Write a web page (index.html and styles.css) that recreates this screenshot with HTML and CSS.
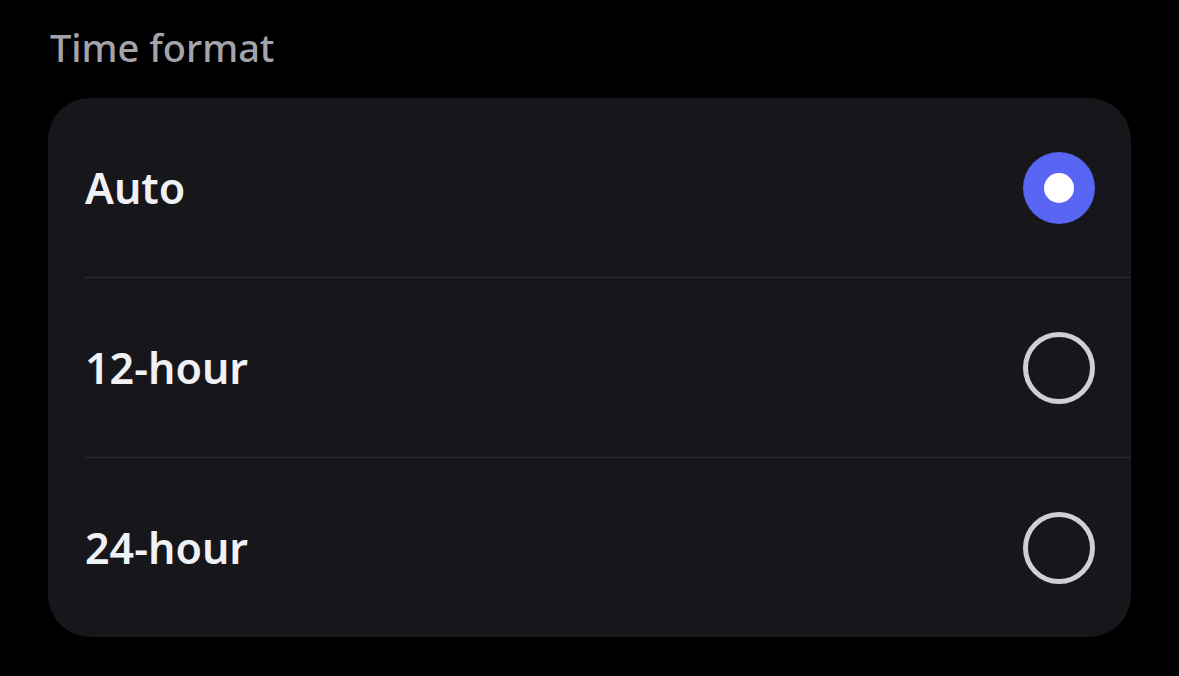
FILE: index.html
```html
<!DOCTYPE html>
<html lang="en">
<head>
<meta charset="utf-8">
<title>Time format</title>
<link rel="stylesheet" href="styles.css">
</head>
<body>
<div class="page">
  <h2 class="section-title">Time format</h2>
  <div class="card">
    <div class="row">
      <span class="label">Auto</span>
      <span class="radio selected"><span class="dot"></span></span>
    </div>
    <div class="row">
      <span class="label">12-hour</span>
      <span class="radio"></span>
    </div>
    <div class="row">
      <span class="label">24-hour</span>
      <span class="radio"></span>
    </div>
  </div>
</div>
</body>
</html>
```
FILE: styles.css
```css
html, body {
  margin: 0;
  padding: 0;
  background: #000;
}
.page {
  width: 1179px;
  height: 676px;
  padding: 0 0 0 48px;
  box-sizing: border-box;
  font-family: "Noto Sans", "Open Sans", sans-serif;
}
.section-title {
  margin: 0;
  padding: 24px 0 0 2px;
  height: 98px;
  box-sizing: border-box;
  font-size: 38px;
  line-height: 46px;
  font-weight: 500;
  color: #a3a4ab;
}
.card {
  width: 1083px;
  background: #16161b;
  border-radius: 42px;
  overflow: hidden;
}
.row {
  margin-left: 36px;
  height: 179px;
  padding-right: 36px;
  display: flex;
  align-items: center;
  justify-content: space-between;
}
.row + .row {
  border-top: 1px solid #2b2b31;
}
.label {
  font-size: 43px;
  font-weight: 600;
  color: #f0f1f4;
  padding-left: 1px;
}
.radio {
  width: 72px;
  height: 72px;
  border-radius: 50%;
  box-sizing: border-box;
  border: 5px solid #cfd0d5;
  display: flex;
  align-items: center;
  justify-content: center;
}
.radio.selected {
  border: none;
  background: #5865f2;
}
.dot {
  width: 30px;
  height: 30px;
  border-radius: 50%;
  background: #fff;
}
```
